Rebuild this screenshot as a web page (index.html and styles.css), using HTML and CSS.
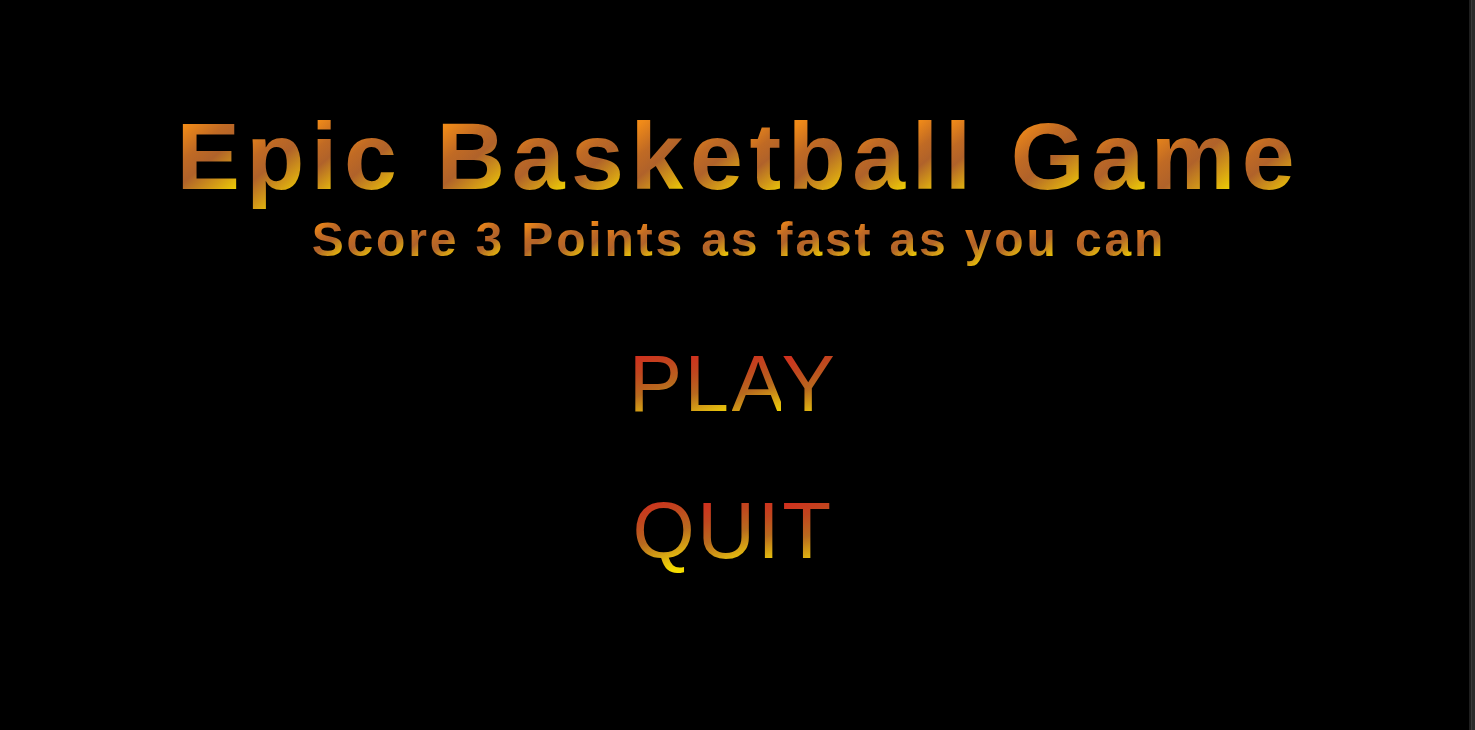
FILE: index.html
```html
<!DOCTYPE html>
<html lang="en">
<head>
<meta charset="utf-8">
<title>Epic Basketball Game</title>
<link rel="stylesheet" href="styles.css">
</head>
<body>
<div class="screen">
  <main class="menu">
    <h1 class="title"><span class="ch">E</span><span class="ch">p</span><span class="ch">i</span><span class="ch">c</span> <span class="ch">B</span><span class="ch">a</span><span class="ch">s</span><span class="ch">k</span><span class="ch">e</span><span class="ch">t</span><span class="ch">b</span><span class="ch">a</span><span class="ch">l</span><span class="ch">l</span> <span class="ch">G</span><span class="ch">a</span><span class="ch">m</span><span class="ch">e</span></h1>
    <p class="subtitle"><span class="ch">S</span><span class="ch">c</span><span class="ch">o</span><span class="ch">r</span><span class="ch">e</span> <span class="ch">3</span> <span class="ch">P</span><span class="ch">o</span><span class="ch">i</span><span class="ch">n</span><span class="ch">t</span><span class="ch">s</span> <span class="ch">a</span><span class="ch">s</span> <span class="ch">f</span><span class="ch">a</span><span class="ch">s</span><span class="ch">t</span> <span class="ch">a</span><span class="ch">s</span> <span class="ch">y</span><span class="ch">o</span><span class="ch">u</span> <span class="ch">c</span><span class="ch">a</span><span class="ch">n</span></p>
    <button class="menu-btn play"><span class="ch">P</span><span class="ch">L</span><span class="ch">A</span><span class="ch">Y</span></button>
    <button class="menu-btn quit"><span class="ch">Q</span><span class="ch">U</span><span class="ch">I</span><span class="ch">T</span></button>
  </main>
  <div class="edge"></div>
</div>
</body>
</html>
```

FILE: styles.css
```css
html, body {
  margin: 0;
  padding: 0;
  height: 100%;
  background: #000;
}

.screen {
  display: flex;
  height: 730px;
  width: 100%;
  background: #000;
  overflow: hidden;
}

.menu {
  flex: 1;
  display: flex;
  flex-direction: column;
  align-items: center;
  padding-top: 109px;
  padding-left: 6px;
  font-family: "Liberation Sans", Arial, sans-serif;
}

.edge {
  width: 6px;
  flex: none;
  background: linear-gradient(to right, #1e1e1e 0, #1e1e1e 2px, #3a3a3a 2px, #3a3a3a 3px, #2b2b2b 3px);
}

.ch {
  -webkit-background-clip: text;
  background-clip: text;
  color: transparent;
  -webkit-text-fill-color: transparent;
}

.title {
  margin: 0;
  font-size: 95px;
  font-weight: 700;
  line-height: 1;
  letter-spacing: 6.6px;
  margin-right: -2.6px;
  white-space: nowrap;
}

.title .ch,
.subtitle .ch {
  background-image: linear-gradient(140deg, #f7921a 0%, #f08a18 18%, #c06a24 38%, #b0622a 52%, #d49c16 70%, #f2d600 86%, #f5dc00 100%);
}

.subtitle {
  margin: 12px 0 0;
  font-size: 48px;
  font-weight: 700;
  line-height: 1;
  letter-spacing: 2.85px;
  margin-right: -2.85px;
  white-space: nowrap;
}

.menu-btn {
  background: none;
  border: 0;
  padding: 0;
  font-family: "Liberation Sans", Arial, sans-serif;
  font-size: 80px;
  font-weight: 400;
  line-height: 1;
  letter-spacing: 2.5px;
  margin-right: 9px;
  cursor: pointer;
  white-space: nowrap;
}

.menu-btn .ch {
  background-image: linear-gradient(160deg, #d82a20 0%, #d0301e 18%, #c0461e 35%, #b86a1e 55%, #dcae12 74%, #f5dc00 88%, #f5dc00 100%);
}

.play {
  margin-top: 80px;
}

.quit {
  margin-top: 67px;
}
```
